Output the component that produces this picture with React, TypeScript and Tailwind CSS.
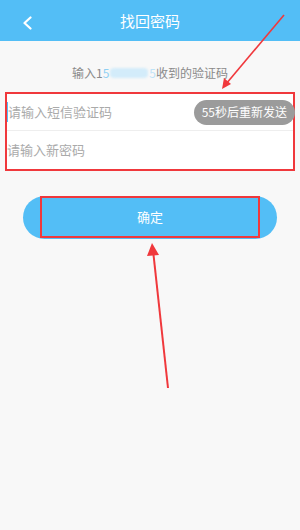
const font = { fontFamily: '"Noto Sans CJK SC", "Noto Sans", sans-serif' }

export default function App() {
  return (
    <div className="relative w-[300px] h-[530px] bg-[#f8f8f8] overflow-hidden" style={font}>
      <header className="h-[41px] bg-[#53bef6] flex items-center relative">
        <svg className="absolute left-[22px] top-[16px] w-[11px] h-[14px]" viewBox="0 0 11 14" fill="none">
          <path d="M8.5 1.5L2.5 7l6 5.5" stroke="white" strokeWidth="2.2" strokeLinecap="round" strokeLinejoin="round" />
        </svg>
        <h1 className="w-full text-center text-white text-[15px] leading-none">找回密码</h1>
      </header>

      {/* phone number is blurred in the shot */}
      <p className="mt-[24px] flex items-center justify-center text-[12px] leading-[16px] text-[#8a8a8a]">
        输入1<span className="text-[#8fd0f3]">5</span>
        <span className="w-[38px] h-[10px] mx-[1px] rounded-sm bg-[#d3ecfa] blur-[1px]" />
        <span className="text-[#bfe3f7]">5</span>收到的验证码
      </p>

      <div className="mt-[11px] mx-[5px] bg-white border-2 border-[#f0383c] relative">
        <div className="h-[37px] flex items-center justify-between border-b border-[#eeeeee]">
          <span className="text-[13px] text-[#aaa] border-l border-[#53bef6]">请输入短信验证码</span>
          <span className="h-[25px] px-[8px] rounded-full bg-[#9b9b9b] text-white text-[12px] flex items-center mr-[-2px]">55秒后重新发送</span>
        </div>
        <div className="h-[38px] flex items-center">
          <span className="text-[13px] text-[#aaa]">请输入新密码</span>
        </div>
      </div>

      <div className="mt-[25px] mx-[23px] h-[43px] rounded-full bg-[#53bef6] flex justify-center">
        <div className="w-[220px] h-[42px] border-2 border-[#f0383c] flex items-center justify-center text-white text-[13px]">
          确定
        </div>
      </div>

      <svg className="absolute inset-0 pointer-events-none" width="300" height="530" viewBox="0 0 300 530">
        <line x1="284" y1="15" x2="226" y2="84" stroke="#f0383c" strokeWidth="1.6" />
        <polygon points="222,89 224,78 231,84" fill="#f0383c" />
        <line x1="168" y1="388" x2="153" y2="250" stroke="#f0383c" strokeWidth="2" />
        <polygon points="152,243 147,256 159,255" fill="#f0383c" />
      </svg>
    </div>
  )
}
